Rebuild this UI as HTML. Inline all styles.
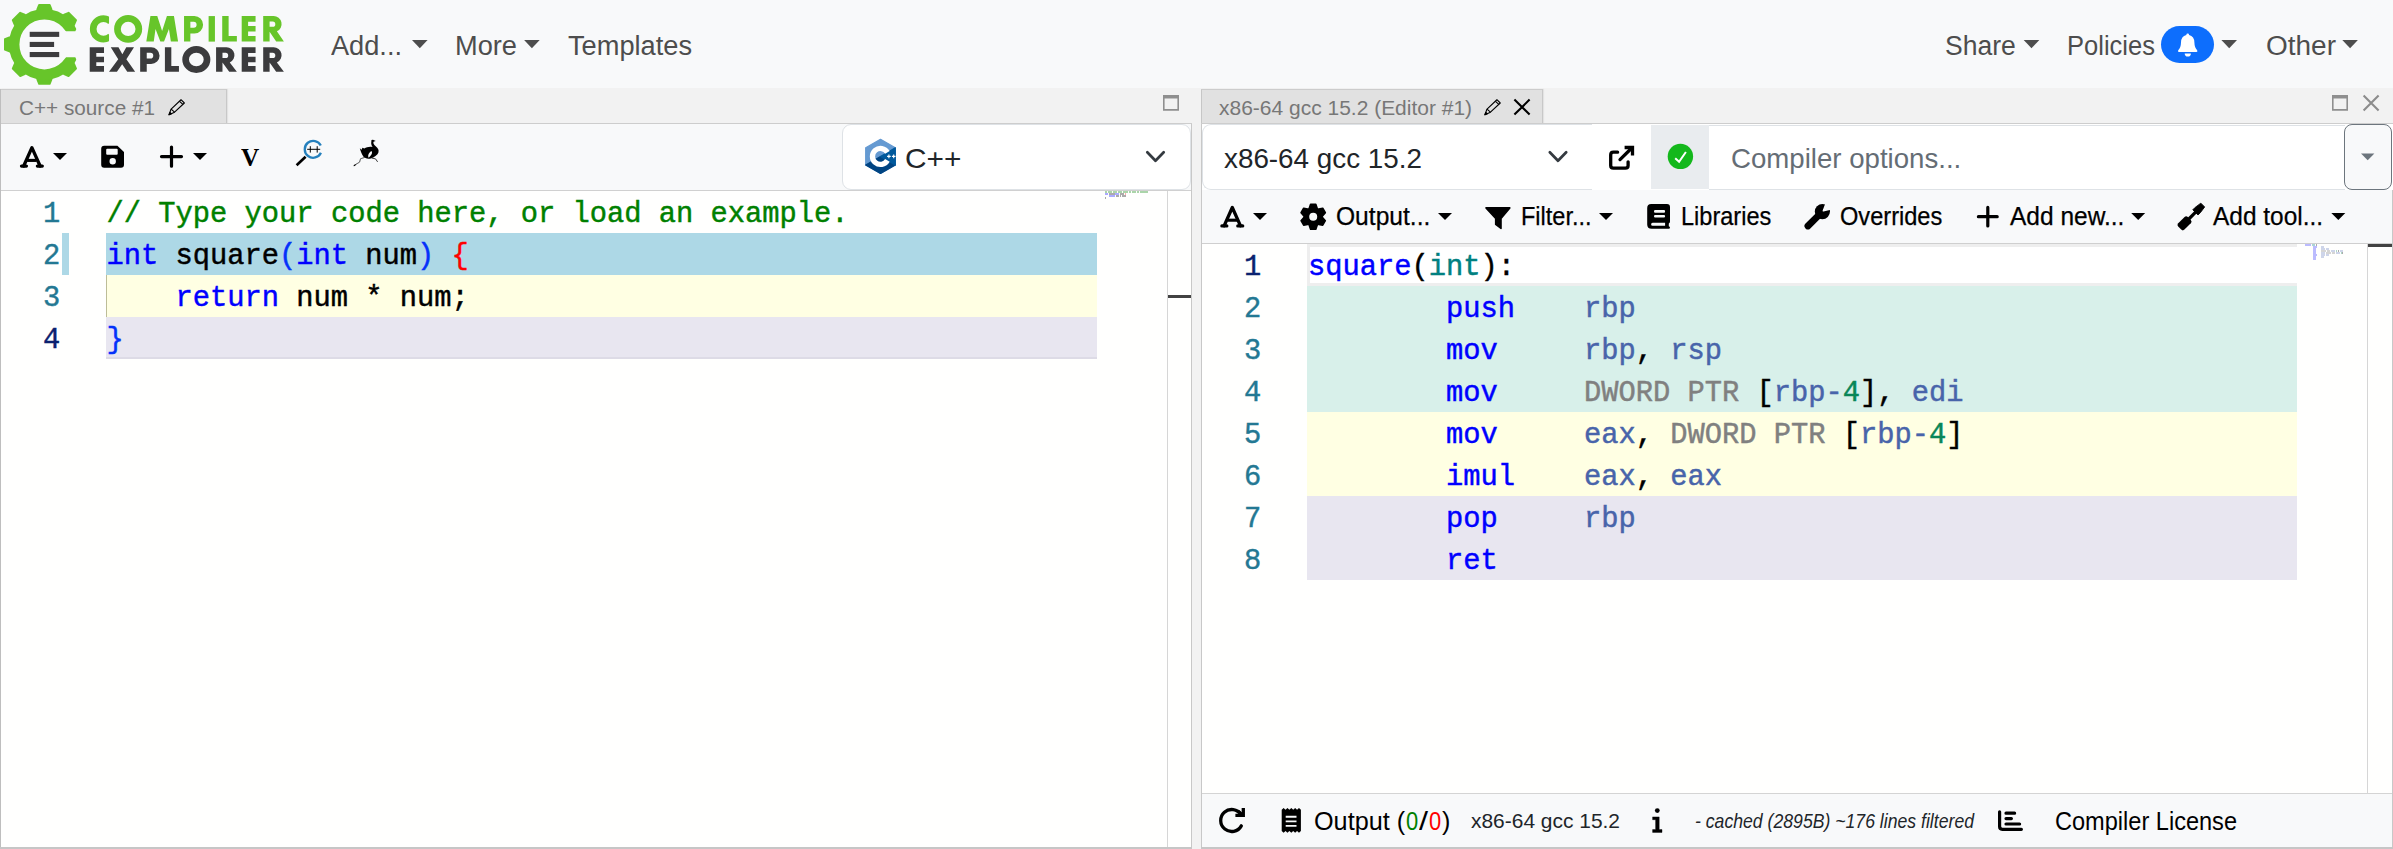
<!DOCTYPE html>
<html><head><meta charset="utf-8"><title>Compiler Explorer</title>
<style>
html,body{margin:0;padding:0;}
body{width:2393px;height:849px;overflow:hidden;position:relative;background:#f8f9fa;font-family:"Liberation Sans",sans-serif;}
.b{position:absolute;box-sizing:border-box;display:block;}
.t{position:absolute;white-space:pre;transform-origin:0 0;display:block;}
</style></head><body>
<div class="b" style="left:0px;top:0px;width:2393px;height:88px;background:#f8f9fa;"></div>
<div class="b" style="left:0px;top:88px;width:2393px;height:761px;background:#f2f2f2;"></div>
<svg class="b" style="left:0;top:0" width="300" height="88" viewBox="0 0 300 88"><polygon points="60.38,17.95 64.13,14.63 68.58,12.72 76.08,20.22 74.17,24.67 70.85,28.42" fill="#67c52a" stroke="#67c52a" stroke-width="1.8" stroke-linejoin="round"/><polygon points="37.00,14.40 37.30,9.40 39.10,4.90 49.70,4.90 51.50,9.40 51.80,14.40" fill="#67c52a" stroke="#67c52a" stroke-width="1.8" stroke-linejoin="round"/><polygon points="17.95,28.42 14.63,24.67 12.72,20.22 20.22,12.72 24.67,14.63 28.42,17.95" fill="#67c52a" stroke="#67c52a" stroke-width="1.8" stroke-linejoin="round"/><polygon points="14.40,51.80 9.40,51.50 4.90,49.70 4.90,39.10 9.40,37.30 14.40,37.00" fill="#67c52a" stroke="#67c52a" stroke-width="1.8" stroke-linejoin="round"/><polygon points="28.42,70.85 24.67,74.17 20.22,76.08 12.72,68.58 14.63,64.13 17.95,60.38" fill="#67c52a" stroke="#67c52a" stroke-width="1.8" stroke-linejoin="round"/><polygon points="51.80,74.40 51.50,79.40 49.70,83.90 39.10,83.90 37.30,79.40 37.00,74.40" fill="#67c52a" stroke="#67c52a" stroke-width="1.8" stroke-linejoin="round"/><polygon points="70.85,60.38 74.17,64.13 76.08,68.58 68.58,76.08 64.13,74.17 60.38,70.85" fill="#67c52a" stroke="#67c52a" stroke-width="1.8" stroke-linejoin="round"/><circle cx="44.4" cy="44.4" r="30.2" fill="none" stroke="#67c52a" stroke-width="10.4"/><path d="M62 31.3H75.3L77 28 80 28V61H77L75.3 57.3H62Z" fill="#f8f9fa"/><path d="M62 31.3C64 31.3 64.5 31.3 66 31.3V57.3H62Z" fill="#f8f9fa"/><rect x="29.7" y="31.8" width="29.5" height="5.1" fill="#3c3c3e"/><rect x="29.7" y="41.9" width="24.4" height="5.1" fill="#3c3c3e"/><rect x="29.7" y="52" width="29.5" height="5.1" fill="#3c3c3e"/><g transform="translate(84 8) scale(0.087756)"><clipPath id="cc"><path d="M0 0H287V172L222 238 287 304V480H0Z"/></clipPath><circle cx="222" cy="238" r="117" fill="none" stroke="#67c52a" stroke-width="76" clip-path="url(#cc)"/><ellipse cx="503" cy="238" rx="122" ry="119" fill="none" stroke="#67c52a" stroke-width="76"/><path fill="#67c52a" d="M710 383L757 92H835L890 262 945 92H1025L1072 383H990L968 240 912 383H870L815 240 795 383Z"/><path fill="#67c52a" fill-rule="evenodd" d="M1140 92H1258A99 99 0 0 1 1258 290H1212V383H1140ZM1212 158H1250A33 33 0 0 1 1250 224H1212Z"/><rect fill="#67c52a" x="1420" y="92" width="72" height="291"/><path fill="#67c52a" d="M1575 92H1648V318H1742V383H1575Z"/><path fill="#67c52a" d="M1797 92H1955V157H1870V205H1955V268H1870V318H1955V383H1797Z"/><path fill="#67c52a" fill-rule="evenodd" d="M2042 92H2160A91 91 0 0 1 2198 266L2278 383H2190L2115 272V383H2042ZM2115 155H2150A30 30 0 0 1 2150 215H2115Z"/><path fill="#3b3b3d" d="M65 447H228V512H140V555H228V618H140V662H228V727H65Z"/><path fill="#3b3b3d" d="M305 447H393L437 527 482 447H570L483 583 583 727H493L435 640 375 727H285L390 583Z"/><path fill="#3b3b3d" fill-rule="evenodd" d="M640 447H765A96 96 0 0 1 765 639H715V727H640ZM715 511H757A32 32 0 0 1 757 575H715Z"/><path fill="#3b3b3d" d="M922 447H995V662H1082V727H922Z"/><ellipse cx="1280" cy="587" rx="122" ry="115" fill="none" stroke="#3b3b3d" stroke-width="76"/><path fill="#3b3b3d" fill-rule="evenodd" d="M1505 447H1623A91 91 0 0 1 1661 621L1742 727H1655L1578 622V727H1505ZM1578 510H1613A30 30 0 0 1 1613 570H1578Z"/><path fill="#3b3b3d" d="M1797 447H1955V512H1870V555H1955V618H1870V662H1955V727H1797Z"/><path fill="#3b3b3d" fill-rule="evenodd" d="M2042 447H2160A91 91 0 0 1 2198 621L2278 727H2190L2115 622V727H2042ZM2115 510H2150A30 30 0 0 1 2150 570H2115Z"/></g></svg>
<span class="t" style="left:331.00px;top:32.90px;font:normal 400 27px/27px 'Liberation Sans',sans-serif;color:#4d4d4d;transform:scaleX(1.0064);">Add...</span>
<span class="t" style="left:455.00px;top:32.90px;font:normal 400 27px/27px 'Liberation Sans',sans-serif;color:#4d4d4d;transform:scaleX(1.0078);">More</span>
<span class="t" style="left:568.00px;top:32.90px;font:normal 400 27px/27px 'Liberation Sans',sans-serif;color:#4d4d4d;transform:scaleX(1.0076);">Templates</span>
<span class="t" style="left:1944.60px;top:32.90px;font:normal 400 27px/27px 'Liberation Sans',sans-serif;color:#4d4d4d;transform:scaleX(0.9826);">Share</span>
<span class="t" style="left:2067.00px;top:32.90px;font:normal 400 27px/27px 'Liberation Sans',sans-serif;color:#4d4d4d;transform:scaleX(0.9458);">Policies</span>
<div class="b" style="left:2161px;top:25.7px;width:53.09999999999991px;height:37.400000000000006px;background:#0d6efd;border-radius:18.7px;"></div>
<span class="t" style="left:2266.00px;top:32.90px;font:normal 400 27px/27px 'Liberation Sans',sans-serif;color:#4d4d4d;transform:scaleX(1.0366);">Other</span>
<div class="b" style="left:1px;top:89px;width:226px;height:34px;background:#e1e1e1;box-shadow:1px 0 1px rgba(0,0,0,0.06);border-top:1px solid #cccccc;border-right:1px solid #c8c8c8;"></div>
<span class="t" style="left:19.00px;top:97.67px;font:normal 400 20.25px/20.25px 'Liberation Sans',sans-serif;color:#777;transform:scaleX(1.0238);">C++ source #1</span>
<div class="b" style="left:0px;top:123px;width:1192px;height:1px;background:#cdcdcd;"></div>
<div class="b" style="left:1px;top:124px;width:1190px;height:66px;background:#f8f9fa;"></div>
<div class="b" style="left:1px;top:190px;width:1190px;height:1px;background:#d0d0d0;"></div>
<span class="t" style="left:241.00px;top:144.65px;font:normal 700 25.5px/25.5px 'Liberation Serif',serif;color:#000;transform:scaleX(0.9883);">V</span>
<div class="b" style="left:842px;top:124px;width:349px;height:66px;background:#fff;border:1px solid #dee2e6;border-radius:9px;"></div>
<span class="t" style="left:904.60px;top:144.70px;font:normal 400 27.4px/27.4px 'Liberation Sans',sans-serif;color:#212529;transform:scaleX(1.0890);">C++</span>
<div class="b" style="left:1px;top:191px;width:1190px;height:656px;background:#fffffe;"></div>
<div class="b" style="left:0px;top:89px;width:1px;height:760px;background:#bebebe;"></div>
<div class="b" style="left:1191px;top:124px;width:1px;height:725px;background:#c8c8c8;"></div>
<div class="b" style="left:1167px;top:191px;width:1px;height:656px;background:#d6d6d6;"></div>
<div class="b" style="left:1168px;top:295px;width:23px;height:3px;background:#424242;"></div>
<div class="b" style="left:106px;top:233px;width:991px;height:42px;background:#add8e6;"></div>
<div class="b" style="left:106px;top:275px;width:991px;height:42px;background:#ffffe3;"></div>
<div class="b" style="left:106px;top:317px;width:991px;height:42px;background:#e8e6f0;"></div>
<div class="b" style="left:106px;top:275px;width:1px;height:42px;background:#bdbd98;"></div>
<div class="b" style="left:106px;top:357px;width:991px;height:2px;background:#dddbe6;"></div>
<div class="b" style="left:62px;top:233px;width:7px;height:42px;background:#add8e6;"></div>
<span class="t" style="left:43.00px;top:201.03px;font:normal 400 28.75px/28.75px 'Liberation Mono',monospace;color:#237893;-webkit-text-stroke:0.4px #237893;">1</span>
<span class="t" style="left:43.00px;top:243.03px;font:normal 400 28.75px/28.75px 'Liberation Mono',monospace;color:#237893;-webkit-text-stroke:0.4px #237893;">2</span>
<span class="t" style="left:43.00px;top:285.02px;font:normal 400 28.75px/28.75px 'Liberation Mono',monospace;color:#237893;-webkit-text-stroke:0.4px #237893;">3</span>
<span class="t" style="left:43.00px;top:327.02px;font:normal 400 28.75px/28.75px 'Liberation Mono',monospace;color:#0b216f;-webkit-text-stroke:0.4px #0b216f;">4</span>
<span class="t" style="left:106.60px;top:201.03px;font:normal 400 28.75px/28.75px 'Liberation Mono',monospace;color:#008000;-webkit-text-stroke:0.45px #008000;">// Type your code here, or load an example.</span>
<span class="t" style="left:106.60px;top:243.03px;font:normal 400 28.75px/28.75px 'Liberation Mono',monospace;color:#0000ff;-webkit-text-stroke:0.45px #0000ff;">int</span>
<span class="t" style="left:175.60px;top:243.03px;font:normal 400 28.75px/28.75px 'Liberation Mono',monospace;color:#000;-webkit-text-stroke:0.45px #000;">square</span>
<span class="t" style="left:279.10px;top:243.03px;font:normal 400 28.75px/28.75px 'Liberation Mono',monospace;color:#0431fa;-webkit-text-stroke:0.45px #0431fa;">(</span>
<span class="t" style="left:296.35px;top:243.03px;font:normal 400 28.75px/28.75px 'Liberation Mono',monospace;color:#0000ff;-webkit-text-stroke:0.45px #0000ff;">int</span>
<span class="t" style="left:365.35px;top:243.03px;font:normal 400 28.75px/28.75px 'Liberation Mono',monospace;color:#000;-webkit-text-stroke:0.45px #000;">num</span>
<span class="t" style="left:417.10px;top:243.03px;font:normal 400 28.75px/28.75px 'Liberation Mono',monospace;color:#0431fa;-webkit-text-stroke:0.45px #0431fa;">)</span>
<span class="t" style="left:451.60px;top:243.03px;font:normal 400 28.75px/28.75px 'Liberation Mono',monospace;color:#ff0000;-webkit-text-stroke:0.45px #ff0000;">{</span>
<span class="t" style="left:175.60px;top:285.02px;font:normal 400 28.75px/28.75px 'Liberation Mono',monospace;color:#0000ff;-webkit-text-stroke:0.45px #0000ff;">return</span>
<span class="t" style="left:296.35px;top:285.02px;font:normal 400 28.75px/28.75px 'Liberation Mono',monospace;color:#000;-webkit-text-stroke:0.45px #000;">num * num;</span>
<span class="t" style="left:106.60px;top:327.02px;font:normal 400 28.75px/28.75px 'Liberation Mono',monospace;color:#0431fa;-webkit-text-stroke:0.45px #0431fa;">}</span>
<div class="b" style="left:1201px;top:89px;width:342px;height:34px;background:#e1e1e1;box-shadow:1px 0 1px rgba(0,0,0,0.06);border-left:1px solid #c6c6c6;border-top:1px solid #cccccc;border-right:1px solid #c8c8c8;"></div>
<span class="t" style="left:1219.00px;top:97.67px;font:normal 400 20.25px/20.25px 'Liberation Sans',sans-serif;color:#777;transform:scaleX(1.0362);">x86-64 gcc 15.2 (Editor #1)</span>
<div class="b" style="left:1201px;top:123px;width:1192px;height:1px;background:#cdcdcd;"></div>
<div class="b" style="left:1201px;top:124px;width:1px;height:725px;background:#c8c8c8;"></div>
<div class="b" style="left:1202px;top:124px;width:1191px;height:66px;background:#fff;"></div>
<div class="b" style="left:1202px;top:124px;width:390px;height:66px;background:#fff;border:1px solid #dee2e6;border-right:none;border-radius:9px 0 0 9px;"></div>
<span class="t" style="left:1224.00px;top:144.70px;font:normal 400 27.4px/27.4px 'Liberation Sans',sans-serif;color:#212529;transform:scaleX(1.0155);">x86-64 gcc 15.2</span>
<div class="b" style="left:1650.6px;top:125px;width:58.40000000000009px;height:64px;background:#e9ecef;"></div>
<div class="b" style="left:1709px;top:124.5px;width:636px;height:1.0px;background:#dee2e6;"></div>
<div class="b" style="left:1709px;top:189px;width:636px;height:1px;background:#dee2e6;"></div>
<span class="t" style="left:1730.60px;top:144.60px;font:normal 400 27.2px/27.2px 'Liberation Sans',sans-serif;color:#656d75;transform:scaleX(1.0160);">Compiler options...</span>
<div class="b" style="left:2344.2px;top:124px;width:47.80000000000018px;height:65.6px;background:#f8f9fa;border:1px solid #6c757d;border-radius:8px;"></div>
<div class="b" style="left:1202px;top:190px;width:1190px;height:53px;background:#f8f9fa;"></div>
<div class="b" style="left:1202px;top:243px;width:1190px;height:1px;background:#cfcfcf;"></div>
<div class="b" style="left:2392px;top:190px;width:1px;height:659px;background:#c8c8c8;"></div>
<span class="t" style="left:1335.70px;top:204.35px;font:normal 400 25.5px/25.5px 'Liberation Sans',sans-serif;color:#000;transform:scaleX(0.9642);-webkit-text-stroke:0.25px #000;">Output...</span>
<span class="t" style="left:1520.80px;top:204.35px;font:normal 400 25.5px/25.5px 'Liberation Sans',sans-serif;color:#000;transform:scaleX(0.9227);-webkit-text-stroke:0.25px #000;">Filter...</span>
<span class="t" style="left:1681.30px;top:204.35px;font:normal 400 25.5px/25.5px 'Liberation Sans',sans-serif;color:#000;transform:scaleX(0.9233);-webkit-text-stroke:0.25px #000;">Libraries</span>
<span class="t" style="left:1839.50px;top:204.35px;font:normal 400 25.5px/25.5px 'Liberation Sans',sans-serif;color:#000;transform:scaleX(0.9255);-webkit-text-stroke:0.25px #000;">Overrides</span>
<span class="t" style="left:2009.60px;top:204.35px;font:normal 400 25.5px/25.5px 'Liberation Sans',sans-serif;color:#000;transform:scaleX(0.9607);-webkit-text-stroke:0.25px #000;">Add new...</span>
<span class="t" style="left:2213.10px;top:204.35px;font:normal 400 25.5px/25.5px 'Liberation Sans',sans-serif;color:#000;transform:scaleX(0.9580);-webkit-text-stroke:0.25px #000;">Add tool...</span>
<div class="b" style="left:1202px;top:244px;width:1190px;height:549px;background:#fffffe;"></div>
<div class="b" style="left:2367px;top:244px;width:1px;height:549px;background:#d6d6d6;"></div>
<div class="b" style="left:2368px;top:244px;width:24px;height:3px;background:#424242;"></div>
<div class="b" style="left:1307px;top:244px;width:990px;height:42px;background:#fff;border:3px solid #eeeeee;border-right:none;"></div>
<div class="b" style="left:1307px;top:286px;width:990px;height:126px;background:#d8f0ea;"></div>
<div class="b" style="left:1307px;top:412px;width:990px;height:84px;background:#ffffe3;"></div>
<div class="b" style="left:1307px;top:496px;width:990px;height:84px;background:#e8e6f0;"></div>
<span class="t" style="left:1244.00px;top:254.03px;font:normal 400 28.75px/28.75px 'Liberation Mono',monospace;color:#0b216f;-webkit-text-stroke:0.4px #0b216f;">1</span>
<span class="t" style="left:1244.00px;top:296.02px;font:normal 400 28.75px/28.75px 'Liberation Mono',monospace;color:#237893;-webkit-text-stroke:0.4px #237893;">2</span>
<span class="t" style="left:1244.00px;top:338.02px;font:normal 400 28.75px/28.75px 'Liberation Mono',monospace;color:#237893;-webkit-text-stroke:0.4px #237893;">3</span>
<span class="t" style="left:1244.00px;top:380.02px;font:normal 400 28.75px/28.75px 'Liberation Mono',monospace;color:#237893;-webkit-text-stroke:0.4px #237893;">4</span>
<span class="t" style="left:1244.00px;top:422.02px;font:normal 400 28.75px/28.75px 'Liberation Mono',monospace;color:#237893;-webkit-text-stroke:0.4px #237893;">5</span>
<span class="t" style="left:1244.00px;top:464.02px;font:normal 400 28.75px/28.75px 'Liberation Mono',monospace;color:#237893;-webkit-text-stroke:0.4px #237893;">6</span>
<span class="t" style="left:1244.00px;top:506.02px;font:normal 400 28.75px/28.75px 'Liberation Mono',monospace;color:#237893;-webkit-text-stroke:0.4px #237893;">7</span>
<span class="t" style="left:1244.00px;top:548.02px;font:normal 400 28.75px/28.75px 'Liberation Mono',monospace;color:#237893;-webkit-text-stroke:0.4px #237893;">8</span>
<span class="t" style="left:1308.00px;top:254.03px;font:normal 400 28.75px/28.75px 'Liberation Mono',monospace;color:#0000ff;-webkit-text-stroke:0.45px #0000ff;">square</span>
<span class="t" style="left:1411.50px;top:254.03px;font:normal 400 28.75px/28.75px 'Liberation Mono',monospace;color:#000;-webkit-text-stroke:0.45px #000;">(</span>
<span class="t" style="left:1428.75px;top:254.03px;font:normal 400 28.75px/28.75px 'Liberation Mono',monospace;color:#008080;-webkit-text-stroke:0.45px #008080;">int</span>
<span class="t" style="left:1480.50px;top:254.03px;font:normal 400 28.75px/28.75px 'Liberation Mono',monospace;color:#000;-webkit-text-stroke:0.45px #000;">):</span>
<span class="t" style="left:1446.00px;top:296.02px;font:normal 400 28.75px/28.75px 'Liberation Mono',monospace;color:#0000ff;-webkit-text-stroke:0.45px #0000ff;">push</span>
<span class="t" style="left:1584.00px;top:296.02px;font:normal 400 28.75px/28.75px 'Liberation Mono',monospace;color:#4864aa;-webkit-text-stroke:0.45px #4864aa;">rbp</span>
<span class="t" style="left:1446.00px;top:338.02px;font:normal 400 28.75px/28.75px 'Liberation Mono',monospace;color:#0000ff;-webkit-text-stroke:0.45px #0000ff;">mov</span>
<span class="t" style="left:1584.00px;top:338.02px;font:normal 400 28.75px/28.75px 'Liberation Mono',monospace;color:#4864aa;-webkit-text-stroke:0.45px #4864aa;">rbp</span>
<span class="t" style="left:1635.75px;top:338.02px;font:normal 400 28.75px/28.75px 'Liberation Mono',monospace;color:#000;-webkit-text-stroke:0.45px #000;">,</span>
<span class="t" style="left:1670.25px;top:338.02px;font:normal 400 28.75px/28.75px 'Liberation Mono',monospace;color:#4864aa;-webkit-text-stroke:0.45px #4864aa;">rsp</span>
<span class="t" style="left:1446.00px;top:380.02px;font:normal 400 28.75px/28.75px 'Liberation Mono',monospace;color:#0000ff;-webkit-text-stroke:0.45px #0000ff;">mov</span>
<span class="t" style="left:1584.00px;top:380.02px;font:normal 400 28.75px/28.75px 'Liberation Mono',monospace;color:#808080;-webkit-text-stroke:0.45px #808080;">DWORD PTR</span>
<span class="t" style="left:1756.50px;top:380.02px;font:normal 400 28.75px/28.75px 'Liberation Mono',monospace;color:#000;-webkit-text-stroke:0.45px #000;">[</span>
<span class="t" style="left:1773.75px;top:380.02px;font:normal 400 28.75px/28.75px 'Liberation Mono',monospace;color:#4864aa;-webkit-text-stroke:0.45px #4864aa;">rbp</span>
<span class="t" style="left:1825.50px;top:380.02px;font:normal 400 28.75px/28.75px 'Liberation Mono',monospace;color:#4864aa;-webkit-text-stroke:0.45px #4864aa;">-</span>
<span class="t" style="left:1842.75px;top:380.02px;font:normal 400 28.75px/28.75px 'Liberation Mono',monospace;color:#098658;-webkit-text-stroke:0.45px #098658;">4</span>
<span class="t" style="left:1860.00px;top:380.02px;font:normal 400 28.75px/28.75px 'Liberation Mono',monospace;color:#000;-webkit-text-stroke:0.45px #000;">],</span>
<span class="t" style="left:1911.75px;top:380.02px;font:normal 400 28.75px/28.75px 'Liberation Mono',monospace;color:#4864aa;-webkit-text-stroke:0.45px #4864aa;">edi</span>
<span class="t" style="left:1446.00px;top:422.02px;font:normal 400 28.75px/28.75px 'Liberation Mono',monospace;color:#0000ff;-webkit-text-stroke:0.45px #0000ff;">mov</span>
<span class="t" style="left:1584.00px;top:422.02px;font:normal 400 28.75px/28.75px 'Liberation Mono',monospace;color:#4864aa;-webkit-text-stroke:0.45px #4864aa;">eax</span>
<span class="t" style="left:1635.75px;top:422.02px;font:normal 400 28.75px/28.75px 'Liberation Mono',monospace;color:#000;-webkit-text-stroke:0.45px #000;">,</span>
<span class="t" style="left:1670.25px;top:422.02px;font:normal 400 28.75px/28.75px 'Liberation Mono',monospace;color:#808080;-webkit-text-stroke:0.45px #808080;">DWORD PTR</span>
<span class="t" style="left:1842.75px;top:422.02px;font:normal 400 28.75px/28.75px 'Liberation Mono',monospace;color:#000;-webkit-text-stroke:0.45px #000;">[</span>
<span class="t" style="left:1860.00px;top:422.02px;font:normal 400 28.75px/28.75px 'Liberation Mono',monospace;color:#4864aa;-webkit-text-stroke:0.45px #4864aa;">rbp</span>
<span class="t" style="left:1911.75px;top:422.02px;font:normal 400 28.75px/28.75px 'Liberation Mono',monospace;color:#4864aa;-webkit-text-stroke:0.45px #4864aa;">-</span>
<span class="t" style="left:1929.00px;top:422.02px;font:normal 400 28.75px/28.75px 'Liberation Mono',monospace;color:#098658;-webkit-text-stroke:0.45px #098658;">4</span>
<span class="t" style="left:1946.25px;top:422.02px;font:normal 400 28.75px/28.75px 'Liberation Mono',monospace;color:#000;-webkit-text-stroke:0.45px #000;">]</span>
<span class="t" style="left:1446.00px;top:464.02px;font:normal 400 28.75px/28.75px 'Liberation Mono',monospace;color:#0000ff;-webkit-text-stroke:0.45px #0000ff;">imul</span>
<span class="t" style="left:1584.00px;top:464.02px;font:normal 400 28.75px/28.75px 'Liberation Mono',monospace;color:#4864aa;-webkit-text-stroke:0.45px #4864aa;">eax</span>
<span class="t" style="left:1635.75px;top:464.02px;font:normal 400 28.75px/28.75px 'Liberation Mono',monospace;color:#000;-webkit-text-stroke:0.45px #000;">,</span>
<span class="t" style="left:1670.25px;top:464.02px;font:normal 400 28.75px/28.75px 'Liberation Mono',monospace;color:#4864aa;-webkit-text-stroke:0.45px #4864aa;">eax</span>
<span class="t" style="left:1446.00px;top:506.02px;font:normal 400 28.75px/28.75px 'Liberation Mono',monospace;color:#0000ff;-webkit-text-stroke:0.45px #0000ff;">pop</span>
<span class="t" style="left:1584.00px;top:506.02px;font:normal 400 28.75px/28.75px 'Liberation Mono',monospace;color:#4864aa;-webkit-text-stroke:0.45px #4864aa;">rbp</span>
<span class="t" style="left:1446.00px;top:548.02px;font:normal 400 28.75px/28.75px 'Liberation Mono',monospace;color:#0000ff;-webkit-text-stroke:0.45px #0000ff;">ret</span>
<div class="b" style="left:1202px;top:793px;width:1190px;height:1px;background:#d4d4d4;"></div>
<div class="b" style="left:1202px;top:794px;width:1190px;height:53px;background:#f8f9fa;"></div>
<span class="t" style="left:1314.20px;top:808.10px;font:normal 400 26px/26px 'Liberation Sans',sans-serif;color:#000;transform:scaleX(0.9698);">Output (</span>
<span class="t" style="left:1406.20px;top:808.10px;font:normal 400 26px/26px 'Liberation Sans',sans-serif;color:#008000;transform:scaleX(0.8437);">0</span>
<span class="t" style="left:1418.60px;top:808.10px;font:normal 400 26px/26px 'Liberation Sans',sans-serif;color:#000;transform:scaleX(1.2460);">/</span>
<span class="t" style="left:1428.80px;top:808.10px;font:normal 400 26px/26px 'Liberation Sans',sans-serif;color:#ff0000;transform:scaleX(0.8437);">0</span>
<span class="t" style="left:1442.00px;top:808.10px;font:normal 400 26px/26px 'Liberation Sans',sans-serif;color:#000;transform:scaleX(0.9701);">)</span>
<span class="t" style="left:1471.00px;top:810.30px;font:normal 400 21px/21px 'Liberation Sans',sans-serif;color:#212529;transform:scaleX(0.9971);">x86-64 gcc 15.2</span>
<span class="t" style="left:1694.50px;top:810.98px;font:italic 400 20.25px/20.25px 'Liberation Sans',sans-serif;color:#212529;transform:scaleX(0.8712);">- cached (2895B) ~176 lines filtered</span>
<span class="t" style="left:2055.00px;top:808.10px;font:normal 400 26px/26px 'Liberation Sans',sans-serif;color:#000;transform:scaleX(0.9060);">Compiler License</span>
<div class="b" style="left:0px;top:847px;width:2393px;height:2px;background:#c6c6c6;"></div>
<div class="b" style="left:1192px;top:847px;width:9px;height:2px;background:#f2f2f2;"></div>
<svg class="b" style="left:0;top:0" width="2393" height="849" viewBox="0 0 2393 849"><path d="M412 40H427.6L419.8 48.2Z" fill="#4d4d4d"/><path d="M524.1 40H539.7L531.9 48.2Z" fill="#4d4d4d"/><path d="M2023.7 40H2039.3L2031.5 48.2Z" fill="#4d4d4d"/><g fill="#fff"><path d="M2187.7 33.6Q2189 33.6 2189.1 35Q2194.3 36.4 2194.4 42.4Q2194.5 47.6 2197.2 50.2Q2197.9 52.1 2196.2 52.1H2179.2Q2177.5 52.1 2178.2 50.2Q2180.9 47.6 2181 42.4Q2181.1 36.4 2186.3 35Q2186.4 33.6 2187.7 33.6Z"/><path d="M2184.7 53.4H2190.9A3.1 3.1 0 0 1 2184.7 53.4Z"/></g><path d="M2221.4 40H2237.0L2229.2000000000003 48.2Z" fill="#4d4d4d"/><path d="M2342.3 40H2357.9L2350.1000000000004 48.2Z" fill="#4d4d4d"/><g transform="translate(169 114.8) scale(0.96)" fill="none" stroke="#000" stroke-width="1.15" stroke-linejoin="round"><path d="M0 0L2.2 -6L12.5 -15.7L16 -12.3L5.8 -2.7Z"/><path d="M2.2 -6L5.8 -2.7M11 -14L14.5 -10.8"/><path d="M0 0L1 -2.4L2.6 -1Z" fill="#000"/></g><path d="M1163.8 96.7H1178.2V109.9H1163.8Z" fill="none" stroke="#8f8f8f" stroke-width="1.6"/><rect x="1163" y="95" width="16" height="3.5" fill="#8f8f8f"/><g transform="translate(19.8 145.8)" fill="none" stroke="#000" stroke-width="3.3" stroke-linecap="round" stroke-linejoin="round"><path d="M3.9 20.2L12.1 1.9L20.3 20.2"/><path d="M1.7 20.3H6.6M17.6 20.3H22.5"/><path d="M7.3 14.6H16.9" stroke-linecap="butt" stroke-width="3.1"/></g><path d="M53 153H67L60.0 160Z" fill="#000"/><g transform="translate(101.2 145.8)"><path fill="#000" fill-rule="evenodd" d="M3 0H16.2L22.8 6.3V19Q22.8 22 19.8 22H3Q0 22 0 19V3Q0 0 3 0ZM6 3H15.5Q16.5 3 16.5 4V8Q16.5 9 15.5 9H6Q5 9 5 8V4Q5 3 6 3ZM11.5 12.2A3.2 3.2 0 1 0 11.5 18.6A3.2 3.2 0 1 0 11.5 12.2Z"/></g><path d="M161.5 156.6H181.5M171.5 147.0V166.2" stroke="#000" stroke-width="3.2" stroke-linecap="round" fill="none"/><path d="M193 153H207L200.0 160Z" fill="#000"/><g fill="none"><path d="M320.8 145.6A8.45 8.45 0 1 0 320.92 152.74" stroke="#2580bd" stroke-width="2.3"/><path d="M305.6 156.8L296.6 165.3" stroke="#000" stroke-width="2.6"/><path d="M307.2 149.3H320.2M310.3 146.2V152.6M317.2 146.2V152.6" stroke="#000" stroke-width="1"/></g><g transform="translate(280 130) scale(0.05889)"><path fill="#000" d="M1355 310L1385 337L1400 300L1432 316C1470 292 1520 278 1572 290C1552 262 1542 225 1552 195C1557 172 1586 170 1590 190C1578 220 1590 248 1625 275C1665 305 1685 340 1670 385C1655 425 1600 465 1540 482C1490 495 1440 480 1415 450C1390 415 1370 360 1355 310Z"/><circle cx="1570" cy="183" r="19" fill="#000"/><path fill="#000" d="M1578 167L1626 186L1583 200Z"/><path fill="#f8f9fa" d="M1550 358C1578 378 1558 432 1503 470C1486 440 1508 383 1550 358Z"/><path fill="none" stroke="#222" stroke-width="15" d="M1450 462L1368 488L1352 545L1262 600M1555 476L1622 490L1658 542"/><path fill="none" stroke="#f8f9fa" stroke-width="4" d="M1440 466L1372 490L1356 545L1300 580"/><ellipse cx="1268" cy="600" rx="20" ry="10" transform="rotate(-30 1268 600)" fill="#000"/></g><g><polygon points="880.50,139.30 895.31,147.85 895.31,164.95 880.50,173.50 865.69,164.95 865.69,147.85" fill="#659ad2" stroke="#659ad2" stroke-width="1.2" stroke-linejoin="round"/><polygon points="865.69,164.95 880.50,156.40 895.31,164.95 880.50,173.50" fill="#004482" stroke="#004482" stroke-width="1.2" stroke-linejoin="round"/><polygon points="880.50,156.40 895.31,147.85 895.31,164.95" fill="#00599c" stroke="#00599c" stroke-width="1.2" stroke-linejoin="round"/><path d="M887.40 152.40A8 8 0 1 0 887.40 160.40" fill="none" stroke="#fff" stroke-width="5.3"/><path d="M887.1 156.4H890.7M888.9 154.6V158.20000000000002M891.9 156.4H895.5M893.7 154.6V158.20000000000002" stroke="#fff" stroke-width="1.1" fill="none"/></g><path d="M1147.3 152.2L1155.5 160.8L1163.7 152.2" fill="none" stroke="#343a40" stroke-width="2.7" stroke-linecap="round" stroke-linejoin="round"/><rect x="1105" y="191" width="2" height="2" fill="#008000" opacity="0.33"/><rect x="1108" y="191" width="4" height="2" fill="#008000" opacity="0.33"/><rect x="1113" y="191" width="4" height="2" fill="#008000" opacity="0.33"/><rect x="1118" y="191" width="4" height="2" fill="#008000" opacity="0.33"/><rect x="1123" y="191" width="5" height="2" fill="#008000" opacity="0.33"/><rect x="1129" y="191" width="2" height="2" fill="#008000" opacity="0.33"/><rect x="1132" y="191" width="4" height="2" fill="#008000" opacity="0.33"/><rect x="1137" y="191" width="2" height="2" fill="#008000" opacity="0.33"/><rect x="1140" y="191" width="8" height="2" fill="#008000" opacity="0.33"/><rect x="1105" y="193" width="3" height="2" fill="#0000ff" opacity="0.33"/><rect x="1109" y="193" width="6" height="2" fill="#000" opacity="0.33"/><rect x="1115" y="193" width="4" height="2" fill="#0000ff" opacity="0.33"/><rect x="1120" y="193" width="4" height="2" fill="#000" opacity="0.33"/><rect x="1125" y="193" width="1" height="2" fill="#ff0000" opacity="0.33"/><rect x="1109" y="195" width="6" height="2" fill="#0000ff" opacity="0.33"/><rect x="1116" y="195" width="3" height="2" fill="#000" opacity="0.33"/><rect x="1120" y="195" width="1" height="2" fill="#000" opacity="0.33"/><rect x="1122" y="195" width="4" height="2" fill="#000" opacity="0.33"/><rect x="1105" y="197" width="1" height="2" fill="#000" opacity="0.33"/><g transform="translate(1484.9 114.8) scale(0.96)" fill="none" stroke="#000" stroke-width="1.15" stroke-linejoin="round"><path d="M0 0L2.2 -6L12.5 -15.7L16 -12.3L5.8 -2.7Z"/><path d="M2.2 -6L5.8 -2.7M11 -14L14.5 -10.8"/><path d="M0 0L1 -2.4L2.6 -1Z" fill="#000"/></g><path d="M1514.4 99.6L1529.6 114.6M1529.6 99.6L1514.4 114.6" stroke="#000" stroke-width="2.1" fill="none"/><path d="M2332.8 96.7H2347.2V109.9H2332.8Z" fill="none" stroke="#8f8f8f" stroke-width="1.6"/><rect x="2332" y="95" width="16" height="3.5" fill="#8f8f8f"/><path d="M2363.6 95.6L2378.6 110.6M2378.6 95.6L2363.6 110.6" stroke="#8c8c8c" stroke-width="2.1" fill="none"/><path d="M1549.8 152.2L1558 160.8L1566.2 152.2" fill="none" stroke="#343a40" stroke-width="2.7" stroke-linecap="round" stroke-linejoin="round"/><g fill="none" stroke="#000" stroke-width="3.3" stroke-linecap="round" stroke-linejoin="round"><path d="M1617.6 152.2H1613.4Q1610.7 152.2 1610.7 154.9V165.5Q1610.7 168.2 1613.4 168.2H1625.4Q1628.1 168.2 1628.1 165.5V161.8"/><path d="M1620 159.6L1632 147.8"/><path d="M1624.6 147.5H1632.5V155.4" stroke-linejoin="miter" stroke-linecap="butt"/></g><circle cx="1680.4" cy="156.4" r="12.7" fill="#14b81c"/><path d="M1675.2 158.2L1679.1 161.7L1685.9 152" fill="none" stroke="#fff" stroke-width="2"/><path d="M2361 153.5H2374.4L2367.7 160.3Z" fill="#6c757d"/><g transform="translate(1220.2 205.6)" fill="none" stroke="#000" stroke-width="3.3" stroke-linecap="round" stroke-linejoin="round"><path d="M3.9 20.2L12.1 1.9L20.3 20.2"/><path d="M1.7 20.3H6.6M17.6 20.3H22.5"/><path d="M7.3 14.6H16.9" stroke-linecap="butt" stroke-width="3.1"/></g><path d="M1253 213H1267L1260.0 220Z" fill="#000"/><g fill="#000" stroke="#000" stroke-width="1.6" stroke-linejoin="round"><path d="M1308.9 209.2L1310.6000000000001 204.2H1315.8L1317.5 209.2Z" transform="rotate(0 1313.2 216.7)"/><path d="M1308.9 209.2L1310.6000000000001 204.2H1315.8L1317.5 209.2Z" transform="rotate(60 1313.2 216.7)"/><path d="M1308.9 209.2L1310.6000000000001 204.2H1315.8L1317.5 209.2Z" transform="rotate(120 1313.2 216.7)"/><path d="M1308.9 209.2L1310.6000000000001 204.2H1315.8L1317.5 209.2Z" transform="rotate(180 1313.2 216.7)"/><path d="M1308.9 209.2L1310.6000000000001 204.2H1315.8L1317.5 209.2Z" transform="rotate(240 1313.2 216.7)"/><path d="M1308.9 209.2L1310.6000000000001 204.2H1315.8L1317.5 209.2Z" transform="rotate(300 1313.2 216.7)"/></g><path fill="#000" fill-rule="evenodd" d="M1303.8 216.7A9.4 9.4 0 1 0 1322.6000000000001 216.7A9.4 9.4 0 1 0 1303.8 216.7ZM1309.2 216.7A4 4 0 1 1 1317.2 216.7A4 4 0 1 1 1309.2 216.7Z"/><path d="M1438 213H1452L1445.0 220Z" fill="#000"/><g transform="translate(1485 207)"><path fill="#000" stroke="#000" stroke-width="1.6" stroke-linejoin="round" d="M1 0.9H24.8L16 11.5V21.4L10.7 17.4V11.5Z"/></g><path d="M1599 213H1613L1606.0 220Z" fill="#000"/><g transform="translate(1647.2 204)"><path fill="#000" d="M4 0H19.8Q22.8 0 22.8 3V17.5Q22.8 19 21.6 19.6V22.3Q22.8 22.6 22.8 23.6Q22.8 24.8 21.6 24.8H4.4Q0 24.8 0 20.6V4Q0 0 4 0Z"/><path fill="#f8f9fa" d="M7.9 6.1H16.8Q17.9 6.1 17.9 7.4Q17.9 8.7 16.8 8.7H7.9Q6.8 8.7 6.8 7.4Q6.8 6.1 7.9 6.1ZM7.9 10.9H16.8Q17.9 10.9 17.9 12.2Q17.9 13.5 16.8 13.5H7.9Q6.8 13.5 6.8 12.2Q6.8 10.9 7.9 10.9ZM5.4 18.8H17.9V21.8H5.4Q3.9 21.8 3.9 20.3Q3.9 18.8 5.4 18.8Z"/></g><g><path d="M1807.9 226L1820.6 213.3" stroke="#000" stroke-width="6.8" stroke-linecap="round" fill="none"/><circle cx="1822.4" cy="211.6" r="7.6" fill="#000"/><path d="M1823.4 210.8L1826.6 202.2L1832.6 208.4Z" fill="#f8f9fa" stroke="#f8f9fa" stroke-width="1.6" stroke-linejoin="round"/></g><path d="M1978.3999999999999 216.7H1997.2M1987.8 207.39999999999998V226.0" stroke="#000" stroke-width="3.2" stroke-linecap="round" fill="none"/><path d="M2131.2 213H2145.2L2138.2 220Z" fill="#000"/><g transform="translate(2179.7 228.1) rotate(-45)" fill="#000"><rect x="0" y="-4.4" width="13.6" height="8.8" rx="2.3"/><rect x="12" y="-1.65" width="12" height="3.3"/><path d="M22.2 -3.7H25.5L32.6 -2.7V2.7L25.5 3.7H22.2Z" stroke="#000" stroke-width="0.8" stroke-linejoin="round"/></g><path d="M2331.3 213H2345.3L2338.3 220Z" fill="#000"/><rect x="2305" y="244" width="6" height="2" fill="#3030ff" opacity="0.33"/><rect x="2312" y="244" width="3" height="2" fill="#008080" opacity="0.33"/><rect x="2316" y="244" width="1" height="2" fill="#000" opacity="0.33"/><rect x="2313" y="246" width="4" height="2" fill="#3030ff" opacity="0.33"/><rect x="2321" y="246" width="3" height="2" fill="#6a80c0" opacity="0.33"/><rect x="2313" y="248" width="3" height="2" fill="#3030ff" opacity="0.33"/><rect x="2321" y="248" width="4" height="2" fill="#6a80c0" opacity="0.33"/><rect x="2326" y="248" width="3" height="2" fill="#6a80c0" opacity="0.33"/><rect x="2313" y="250" width="3" height="2" fill="#3030ff" opacity="0.33"/><rect x="2321" y="250" width="5" height="2" fill="#808080" opacity="0.33"/><rect x="2327" y="250" width="3" height="2" fill="#808080" opacity="0.33"/><rect x="2331" y="250" width="4" height="2" fill="#6a80c0" opacity="0.33"/><rect x="2336" y="250" width="1" height="2" fill="#098658" opacity="0.33"/><rect x="2338" y="250" width="1" height="2" fill="#000" opacity="0.33"/><rect x="2340" y="250" width="3" height="2" fill="#6a80c0" opacity="0.33"/><rect x="2313" y="252" width="3" height="2" fill="#3030ff" opacity="0.33"/><rect x="2321" y="252" width="4" height="2" fill="#6a80c0" opacity="0.33"/><rect x="2326" y="252" width="5" height="2" fill="#808080" opacity="0.33"/><rect x="2332" y="252" width="3" height="2" fill="#808080" opacity="0.33"/><rect x="2336" y="252" width="4" height="2" fill="#6a80c0" opacity="0.33"/><rect x="2341" y="252" width="1" height="2" fill="#098658" opacity="0.33"/><rect x="2342" y="252" width="1" height="2" fill="#000" opacity="0.33"/><rect x="2313" y="254" width="4" height="2" fill="#3030ff" opacity="0.33"/><rect x="2321" y="254" width="4" height="2" fill="#6a80c0" opacity="0.33"/><rect x="2326" y="254" width="3" height="2" fill="#6a80c0" opacity="0.33"/><rect x="2313" y="256" width="3" height="2" fill="#3030ff" opacity="0.33"/><rect x="2321" y="256" width="3" height="2" fill="#6a80c0" opacity="0.33"/><rect x="2313" y="258" width="3" height="2" fill="#3030ff" opacity="0.33"/><g fill="none" stroke="#000" stroke-width="3.3" stroke-linejoin="miter"><path d="M1241.03 814.67A11 11 0 1 0 1241.32 825.83" stroke-linecap="round"/><path d="M1243.3 808V815.4H1235.4"/><path d="M1243.3 815.4L1238.6 811" stroke-width="2.4"/></g><g transform="translate(1281.7 808)"><path fill="#000" d="M0 1.7L1.92 0L3.84 1.7L5.76 0L7.68 1.7L9.60 0L11.52 1.7L13.44 0L15.36 1.7L17.28 0L19.20 1.7V23.1L17.28 24.8L15.36 23.1L13.44 24.8L11.52 23.1L9.60 24.8L7.68 23.1L5.76 24.8L3.84 23.1L1.92 24.8L0.00 23.1Z"/><path stroke="#f8f9fa" stroke-width="1.9" fill="none" d="M4 8.8H14.8M4 13.4H14.8M4 17.9H14.8"/></g><g fill="#000"><circle cx="1657.3" cy="810.6" r="2.4"/><path d="M1652.6 816.9H1659.2V829.6H1662V832.4H1652.6V829.6H1655.6V819.7H1652.6Z" stroke="#000" stroke-width="0.4" stroke-linejoin="round"/></g><g fill="none" stroke="#000" stroke-width="3.2" stroke-linecap="round" stroke-linejoin="round"><path d="M1999.6 811.8V826.6Q1999.6 829.3 2002.3 829.3H2021.4"/><path d="M2006 813.2H2014.6M2006 818.6H2011.4M2006 824H2019.6"/></g></svg>
</body></html>
